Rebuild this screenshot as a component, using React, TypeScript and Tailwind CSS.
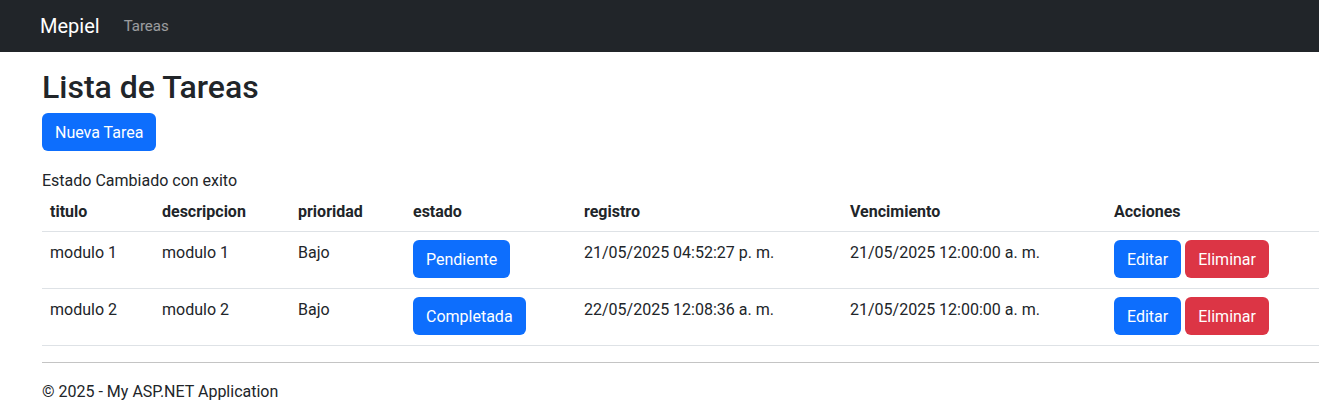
import React from "react";

type Tarea = {
  titulo: string;
  descripcion: string;
  prioridad: string;
  estado: string;
  registro: string;
  vencimiento: string;
};

const tareas: Tarea[] = [
  {
    titulo: "modulo 1",
    descripcion: "modulo 1",
    prioridad: "Bajo",
    estado: "Pendiente",
    registro: "21/05/2025 04:52:27 p. m.",
    vencimiento: "21/05/2025 12:00:00 a. m.",
  },
  {
    titulo: "modulo 2",
    descripcion: "modulo 2",
    prioridad: "Bajo",
    estado: "Completada",
    registro: "22/05/2025 12:08:36 a. m.",
    vencimiento: "21/05/2025 12:00:00 a. m.",
  },
];

const btn =
  "inline-block h-[38px] px-3 rounded-[6px] text-white text-base leading-6 border border-transparent";

const App = () => {
  return (
    <div className="min-h-[417px] bg-white text-[#212529] font-['Roboto',sans-serif] text-base leading-6">
      {/* Navbar */}
      <nav className="h-[52px] bg-[#212529] flex items-center pl-[40px] mb-4">
        <span className="text-white text-xl mr-[24px] -mt-px">Mepiel</span>
        <span className="text-white/55 text-[15px] -mt-px">Tareas</span>
      </nav>

      <main className="pl-[42px]">
        <h1 className="text-[32px] leading-[1.2] font-medium mb-[7px]">Lista de Tareas</h1>
        <p className="mb-4">
          <button className={`${btn} bg-[#0d6efd] pt-px`}>Nueva Tarea</button>
        </p>

        <p className="pt-[2px] -mb-[2px]">Estado Cambiado con exito</p>

        <table className="w-full border-collapse mb-4 text-left">
          <thead>
            <tr className="border-b border-[#dee2e6]">
              <th className="px-2 pt-[9px] pb-[7px] font-bold w-[112px]">titulo</th>
              <th className="px-2 pt-[9px] pb-[7px] font-bold w-[136px]">descripcion</th>
              <th className="px-2 pt-[9px] pb-[7px] font-bold w-[115px]">prioridad</th>
              <th className="px-2 pt-[9px] pb-[7px] font-bold w-[171px]">estado</th>
              <th className="px-2 pt-[9px] pb-[7px] font-bold w-[266px]">registro</th>
              <th className="px-2 pt-[9px] pb-[7px] font-bold w-[264px]">Vencimiento</th>
              <th className="px-2 pt-[9px] pb-[7px] font-bold">Acciones</th>
            </tr>
          </thead>
          <tbody>
            {tareas.map((t) => (
              <tr key={t.titulo} className="border-b border-[#dee2e6] align-top">
                <td className="px-2 pt-[9px] pb-[9px]">{t.titulo}</td>
                <td className="px-2 pt-[9px] pb-[9px]">{t.descripcion}</td>
                <td className="px-2 pt-[9px] pb-[9px]">{t.prioridad}</td>
                <td className="px-2 pt-2 pb-[10px]">
                  <button className={`${btn} bg-[#0d6efd] pt-px`}>{t.estado}</button>
                </td>
                <td className="px-2 pt-[9px] pb-[9px]">{t.registro}</td>
                <td className="px-2 pt-[9px] pb-[9px]">{t.vencimiento}</td>
                <td className="px-2 pt-2 pb-[10px]">
                  <div className="flex gap-1">
                    <button className={`${btn} bg-[#0d6efd] pt-px`}>Editar</button>
                    <button className={`${btn} bg-[#dc3545] pt-px`}>Eliminar</button>
                  </div>
                </td>
              </tr>
            ))}
          </tbody>
        </table>

        <hr className="border-t border-[#c4c4c4]" />

        <footer className="pt-[17px] pb-[15px]">
          <p>© 2025 - My ASP.NET Application</p>
        </footer>
      </main>
    </div>
  );
};

export default App;
